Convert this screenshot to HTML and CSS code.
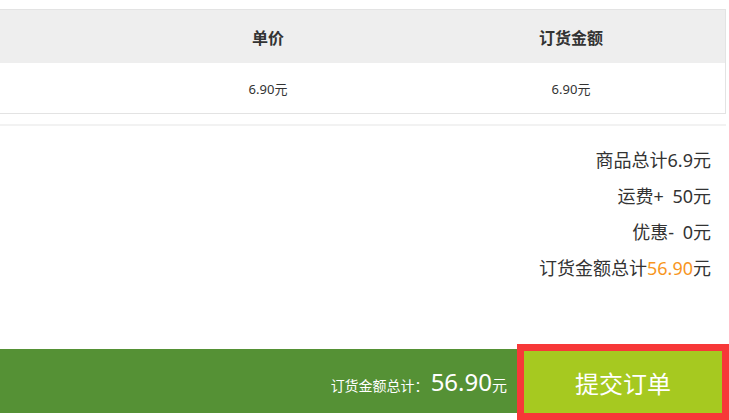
FILE: index.html
```html
<!DOCTYPE html>
<html lang="zh">
<head>
<meta charset="utf-8">
<link rel="stylesheet" href="styles.css">
</head>
<body>
<div class="page">
  <div class="table">
    <div class="row head">
      <div class="cell"></div>
      <div class="cell">单价</div>
      <div class="cell">订货金额</div>
      <div class="cell"></div>
    </div>
    <div class="row body">
      <div class="cell"></div>
      <div class="cell">6.90元</div>
      <div class="cell">6.90元</div>
      <div class="cell"></div>
    </div>
  </div>
  <div class="summary">
    <div class="line">商品总计6.9元</div>
    <div class="line">运费+ 50元</div>
    <div class="line">优惠- 0元</div>
    <div class="line">订货金额总计<span class="orange">56.90</span>元</div>
  </div>
  <div class="bar">
    <div class="total"><span class="label">订货金额总计：</span><span class="amount">56.90</span><span class="unit">元</span></div>
    <button class="submit">提交订单</button>
  </div>
</div>
</body>
</html>
```

FILE: styles.css
```css
* { box-sizing: border-box; }
html, body {
  margin: 0;
  padding: 0;
  background: #fff;
  font-family: "Noto Sans", "Noto Sans CJK SC", sans-serif;
  color: #333;
}
.page {
  width: 729px;
  height: 420px;
  overflow: hidden;
  padding-top: 9px;
}
.table {
  width: 726px;
  border: 1px solid #e3e3e3;
  border-left: none;
}
.row {
  display: grid;
  grid-template-columns: 118px 300px 306px 1fr;
  align-items: center;
}
.head {
  height: 53px;
  background: #eeeeee;
  font-weight: bold;
  font-size: 16px;
  color: #333;
}
.body {
  height: 50px;
  font-size: 13px;
  color: #333;
}
.cell {
  text-align: center;
}
.summary {
  width: 726px;
  margin-top: 10px;
  border-top: 2px solid #f2f2f2;
  padding: 16px 15px 0 0;
  height: 225px;
  text-align: right;
  font-size: 18px;
  word-spacing: 4px;
  color: #333;
}
.line {
  height: 36px;
  line-height: 36px;
}
.orange { color: #f7961e; }
.bar {
  height: 64px;
  background: #559135;
  display: flex;
  justify-content: flex-end;
  align-items: flex-end;
  padding-right: 7px;
}
.total {
  align-self: center;
  color: #fff;
  margin-right: 17px;
  display: flex;
  align-items: baseline;
  white-space: nowrap;
}
.label { font-size: 14px; }
.amount { font-size: 24px; margin-left: 2px; }
.unit { font-size: 15px; }
.submit {
  width: 198px;
  height: 62px;
  border: none;
  background: #a6c920;
  color: #fff;
  font-family: "Noto Sans CJK SC", sans-serif;
  font-size: 24px;
  outline: 7px solid #f73838;
  padding: 0;
}
```
